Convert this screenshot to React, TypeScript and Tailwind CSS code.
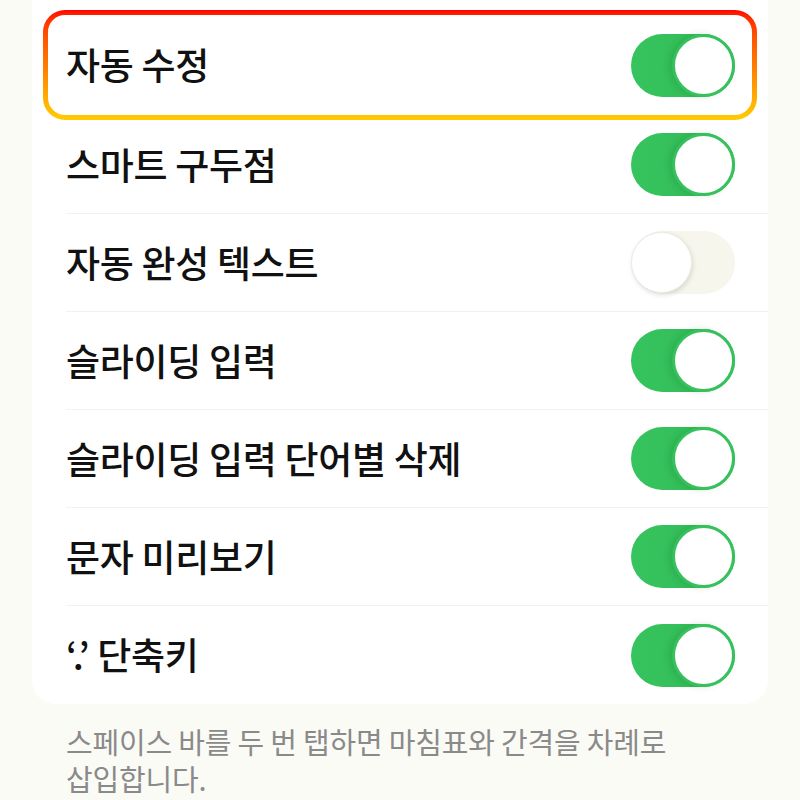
const font = { fontFamily: '"Noto Sans CJK KR", "Noto Sans", sans-serif' };

const rows = [
  { label: "스마트 구두점", on: true },
  { label: "자동 완성 텍스트", on: false },
  { label: "슬라이딩 입력", on: true },
  { label: "슬라이딩 입력 단어별 삭제", on: true },
  { label: "문자 미리보기", on: true },
  { label: "‘.’ 단축키", on: true },
];

const Toggle = ({ on }: { on: boolean }) =>
  on ? (
    <div className="relative flex h-[63px] w-[104px] items-center justify-end rounded-full bg-gradient-to-r from-[#36c45e] to-[#32b957]">
      <div className="h-[63px] w-[63px] rounded-full border-[3px] border-[#36c15d] bg-white shadow-[-3px_0_6px_rgba(0,80,20,0.15)]" />
    </div>
  ) : (
    <div className="relative flex h-[63px] w-[104px] items-center justify-start rounded-full bg-[#f6f6ec]">
      <div className="h-[61px] w-[61px] rounded-full border border-[#ecece6] bg-white shadow-[1px_2px_5px_rgba(0,0,0,0.12)]" />
    </div>
  );

export default function App() {
  return (
    <div className="h-[800px] w-[800px] overflow-hidden bg-[#fbfbf6]" style={font}>
      <div className="mx-[32px] rounded-b-[24px] bg-white">
        {/* highlighted first row */}
        <div className="h-[116px] px-[11px] pt-[10px]">
          <div className="relative h-[110px] rounded-[22px] bg-gradient-to-b from-[#ff0000] via-[#ff7a00] to-[#ffcc00] p-[5px]">
            <div className="flex h-full items-center justify-between rounded-[17px] bg-white pl-[18px] pr-[17px]">
              <span className="text-[37px] font-medium tracking-[-0.3px] text-[#111]">자동 수정</span>
              <Toggle on />
            </div>
          </div>
        </div>

        {rows.map((r, i) => (
          <div key={i} className={`ml-[34px] flex h-[98px] items-center justify-between pr-[33px] ${i < rows.length - 1 ? "border-b border-[#f3f3ea]" : ""}`}>
            <span className="text-[37px] font-medium tracking-[-0.3px] text-[#111]">{r.label}</span>
            <Toggle on={r.on} />
          </div>
        ))}
      </div>

      <div className="mt-[19px] flex flex-col px-[66px] text-[29px] leading-[37px] tracking-[-0.2px] text-[#8a8a8a]">
        <p>스페이스 바를 두 번 탭하면 마침표와 간격을 차례로</p>
        <p>삽입합니다.</p>
      </div>
    </div>
  );
}
